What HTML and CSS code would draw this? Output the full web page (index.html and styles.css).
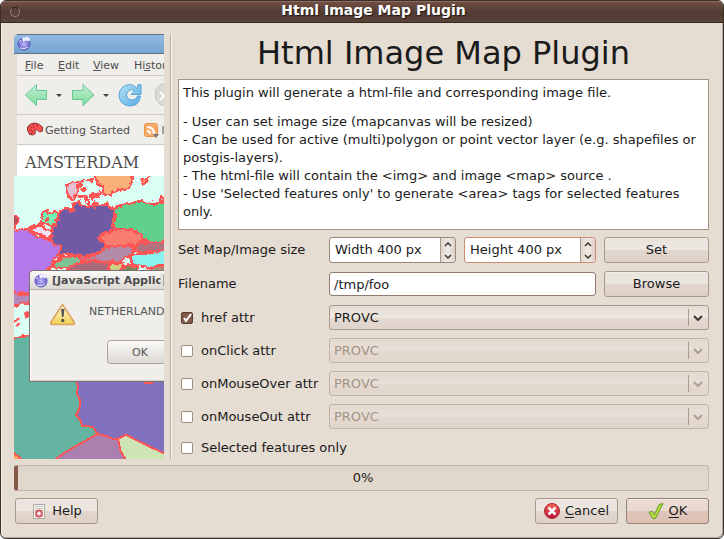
FILE: index.html
```html
<!DOCTYPE html>
<html lang="en">
<head>
<meta charset="utf-8">
<title>Html Image Map Plugin</title>
<link rel="stylesheet" href="styles.css">
</head>
<body>
<div class="window">
  <header class="titlebar"><span class="orb"></span><span class="caption">Html Image Map Plugin</span></header>
  <form class="content">
    <div class="main">
      <svg class="preview" viewBox="14 34 150 425" role="img" aria-label="Map preview in a browser">
        <defs>
          <linearGradient id="blue" x2="0" y2="1"><stop stop-color="#93bbe3"/><stop offset="1" stop-color="#75a2cf"/></linearGradient>
          <linearGradient id="green" x2="0" y2="1"><stop stop-color="#c4edd2"/><stop offset="1" stop-color="#7ddca0"/></linearGradient>
          <linearGradient id="sky" x2="1" y2="1"><stop stop-color="#b5dff5"/><stop offset="1" stop-color="#55aee4"/></linearGradient>
          <linearGradient id="cap" x2="0" y2="1"><stop stop-color="#fbfaf9"/><stop offset="1" stop-color="#dcd8d2"/></linearGradient>
          <linearGradient id="gold" x2="0" y2="1"><stop stop-color="#fffbe0"/><stop offset="1" stop-color="#f0cf4c"/></linearGradient>
          <radialGradient id="globe"><stop stop-color="#c5bfff"/><stop offset="1" stop-color="#5c55c2"/></radialGradient>
          <filter id="coast" color-interpolation-filters="sRGB" filterUnits="userSpaceOnUse" x="0" y="90" width="480" height="900"><feTurbulence type="fractalNoise" baseFrequency=".07" numOctaves="2" seed="4"/><feDisplacementMap in="SourceGraphic" scale="18" xChannelSelector="R" yChannelSelector="G"/></filter>
        </defs>
        <path fill="#dafff4" d="M14 176h150v283H14z"/>
        <g transform="translate(10 140) scale(.33333)" stroke="#ff5555" stroke-width="7" stroke-linejoin="round" filter="url(#coast)" shape-rendering="crispEdges">
          <path fill="#b478ea" d="M-6 278l26-6 8-6 24 3 30 22 22 3 18 10 46 8-4 26-10 14-20 4-8 24-14 10v70H-6z"/>
          <path fill="#b289b8" d="M-6 446l36 18 16 0 16-8v30l-24 6-16 4-28 2z"/>
          <path fill="#65b4a2" stroke="none" d="M-6 596l30-2 20-6h20v6l136 60v310H-6z"/>
          <path fill="none" d="M-6 599l30-5 20-6h20"/>
          <path fill="#b04e5e" d="M-6 216l28 12 2 12-8 12-4 20"/>
          <path fill="#6f5aa3" d="M152 212l14-8 26 10-4-20 12-6 12 8 18 4 26-4 30-4 10 8 18 14 4 16 4 26-8 14-30 18-10 8 6 12 8 14-12 8-16 10-36 8-54-6-28 2 10-24-20-8-12-16 8-28z"/>
          <path fill="#5fd08d" d="M314 210l8-12 60-12 14-4 10 10 70-4v118l-44 4-18-4-36-18-14-8-40-4-14-18 4-18z"/>
          <path fill="#f87d70" d="M264 288l24-10 20-8 30-4 40 8 18 14 6 16-26 10-42 10-48-8z"/>
          <path fill="#b37180" d="M370 324l26-16 80-4v28l-64 6-30-4z"/>
          <path fill="#b28ba9" d="M204 352l50-4 30-24 36-4 44-4 8 16-6 12-20 8-20 16-60-2-60-6z"/>
          <path fill="#89f2ee" d="M358 350l20-8 38-2 60-10v44l-64 8-40-6z"/>
          <path fill="#7dc294" d="M130 372l14-12 34-14 24 4 12 10-8 14-32 10-38-2z"/>
          <path fill="#a96b7c" d="M172 390l8-14 38-8 44-8 34 12-6 24h-50z"/>
          <path fill="#cbd082" d="M294 374l44-4 2 14-14 14h-26z"/>
          <path fill="#788752" d="M340 386l12-14 28 10 10 18h-50z"/>
          <path fill="#b18871" d="M416 386l30-10 30 4v18h-56z"/>
          <path fill="#72f5b5" d="M92 240l6-24 14-4 14 8 10-6 12 10-6 10-6 14-14 8-10-4-14-2-8 2z"/>
          <path fill="#f3e3f8" d="M50 268l24-8 18 0 24 8 10 12-2 14-22-6z"/>
          <path fill="#f8af78" d="M248 94l12 30 18 20 2 20 20 2 24-16 36-6 6-16 4-34z"/>
          <path fill="#e7bfd2" d="M174 170l-4-30 14-12 22-4 8 12-8 10-2 14-14 18z"/>
          <path fill="#e7bfd2" d="M242 164l14-2 2 12-14 2z"/>
          <path fill="#f8af78" d="M394 126l8-8 14-6-8 18-10 2z"/>
          <path fill="#9fcbd0" d="M450 182l2-6 24-10v18z"/>
          <path stroke-width="9" fill="none" d="M210 124l14-4m-8 30l12-6m-22 28l18-6 4 20m-20-8l-4 16m28-16l8 18m2-30l14 6 16-14m-22 34l16-6m-26 14l14 0m-58-60l14-4m18 30l0 4m22-48l-16-4m-46-16l14-6m104 56l6 4m-186-68h36M112 222l6-6m-12 24l12-4m-60 30l30-18"/>
        </g>
        <g transform="translate(10 260) scale(.33333)" fill="#ff5555">
          <path d="M42 158l10-6 8 8-4 12-10 4zM22 190l10-2-8 12-8-2zM12 180h10v4l-10 4zM18 176l10-4v8l-8 2z"/>
        </g>
        <g transform="translate(10 360) scale(.33333)" stroke="#ff5555" stroke-width="6" stroke-linejoin="round" shape-rendering="crispEdges">
          <path fill="#65b4a2" stroke="none" d="M6 30h290v290H6z"/>
          <path fill="#8070be" d="M196 56l8 24-4 18 10 24-2 26-10 16 14 18 4 16 32 2 14 22 28 6 26 12 22-4 14-8 126 66V56z"/>
          <path fill="#ab80af" d="M136 298l34-24 92-52 28 6 18 8 16 0 6 30 16 32v10H130z"/>
          <path fill="#cfe4b4" d="M324 236l24-12 30 16 100 48v20H346v-12l-14-22z"/>
          <path fill="#f8a568" d="M4 270l14 14 24 20H4z"/>
          <path fill="none" d="M402 68h28"/>
        </g>
        <path fill="#fff" d="M14 144h150v32H14z"/>
        <path fill="#efeeeb" d="M14 53h150v92H14z"/>
        <path fill="#e5ddd3" d="M14 53h3v123h-3z"/>
        <path fill="url(#blue)" d="M14 54V39q0-5 5-5h145v20z"/>
        <path stroke="#61717e" d="M17 34.5h147M14 53.500h150"/>
        <path stroke="#d2c9bf" d="M17 75.500h147M17 114.500h147M17 144.500h147"/>
        <g transform="translate(24 44)"><circle r="6.500" fill="url(#globe)"/><path fill="#eef" d="M-2-6.500h3l2-1 3 2-1 3-3-1-3 1z"/><path stroke="#e8e8ff" stroke-width="1" fill="none" d="M-5-2l2-2M-4 4q4 2 8-1"/></g>
        <g class="shot-text">
          <text x="25" y="69">File</text><text x="58" y="69">Edit</text><text x="93" y="69">View</text><text x="134" y="69">Histor</text>
          <text x="45" y="134">Getting Started</text>
          <path stroke="#555" d="M25 70.500h6M58 70.500h7M93 70.500h8M144 70.500h6M163 126v8"/>
        </g>
        <path fill="url(#green)" stroke="#65c793" stroke-linejoin="round" d="M25.500 95l11-10.500v6h10v9h-10v6zM94 95L83 84.500v6H72.500v9H83v6z"/>
        <path fill="#444" d="M56 94h6l-3 3zm47 0h6l-3 3z"/>
        <path fill="url(#sky)" stroke="#58a6d8" d="M137.500 89v-4l3.500-.5v10h-10l3.500-3.500q-3-3-6 0-4 4 0 8 3 2 7 0l2-3h3q-1 10-11 10-10-1-10.500-11 1-10 11-10.500 4 0 7 4z"/>
        <path fill="#dad9d6" stroke="#c9c6c2" d="M165 84h-4l-5.500 6v9l5.500 6h4"/><path stroke="#fff" stroke-width="2" d="M160 92l5 5m-5 3l5-5"/>
        <path fill="#ff4f4f" stroke="#8a3030" d="M27.500 130v-3l3-3 4-1 4 1 4 3v4l-3 1-2-2h-3l1 3-2 2-4-.5z"/><path stroke="#7a2929" stroke-width=".8" d="M29 126l3 2m1-4l1 4m-5 2h3m-1 4l2-3m3-7l2 3"/>
        <rect x="144.500" y="123.500" width="13" height="13" rx="2" fill="#f6ac68" stroke="#e9954b"/><path fill="none" stroke="#fff" stroke-width="2" d="M147 127q7 0 7 7m-7-3q3 0 3 3"/><path fill="#777" d="M153 134h6l-3 4z"/>
        <text class="shot-serif" x="25" y="168">AMSTERDAM</text>
        <path fill="#efeeeb" stroke="#76746f" d="M29.500 381.500V275q0-4.500 5-4.500H170v111z"/>
        <path fill="url(#cap)" d="M30 289v-14q0-4 4-4h130v18z"/><path stroke="#b7b1a9" d="M30 289.500h134"/>
        <path stroke="#fff" d="M30.500 290v90"/><path stroke="#d4d0ca" d="M31 380.500h133"/>
        <g transform="translate(41 281)"><circle r="6.500" fill="url(#globe)"/><path fill="#eef" d="M-2-6.500h3l2-1 3 2-1 3-3-1-3 1z"/><path stroke="#e8e8ff" stroke-width="1" fill="none" d="M-5-2l2-2M-4 4q4 2 8-1"/></g>
        <text class="shot-bold" x="52" y="284">[JavaScript Applic</text><path stroke="#e6e3de" stroke-width="3" d="M162 273v14"/><path stroke="#aaa59f" d="M163.500 275v11"/>
        <path fill="url(#gold)" stroke="#dba163" stroke-width="1.500" stroke-linejoin="round" d="M62.500 304.500L51 322q-1 2.500 1 2.500h21q2 0 1-2.500z"/>
        <path fill="#555" d="M61 309h3.500l-1 8h-1.500z"/><circle cx="62.700" cy="320.500" r="1.700" fill="#555"/>
        <text class="shot-small" x="89" y="315">NETHERLAND</text>
        <rect x="107.500" y="340.500" width="70" height="23" rx="3" fill="url(#cap)" stroke="#a9a197"/>
        <text class="shot-small" x="132" y="356">OK</text>
      </svg>
      <div class="divider"></div>
      <section class="settings">
        <h1>Html Image Map Plugin</h1>
        <div class="about">
          <p>This plugin will generate a html-file and corresponding image file.</p>
          <p>- User can set image size (mapcanvas will be resized)<br>- Can be used for active (multi)polygon or point vector layer (e.g. shapefiles or postgis-layers).<br>- The html-file will contain the &lt;img&gt; and image &lt;map&gt; source .<br>- Use 'Selected features only' to generate &lt;area&gt; tags for selected features only.</p>
        </div>
        <div class="fields">
          <label for="width">Set Map/Image size</label>
          <div class="sizes">
            <div class="spin"><input id="width" type="text" value="Width 400 px"><span class="steps"><button type="button" aria-label="Increase width"><svg viewBox="0 0 8 5"><path d="M1 4l3-3 3 3"/></svg></button><button type="button" aria-label="Decrease width"><svg viewBox="0 0 8 5"><path d="M1 1l3 3 3-3"/></svg></button></span></div>
            <div class="spin active"><input type="text" value="Height 400 px" aria-label="Height"><span class="steps"><button type="button" aria-label="Increase height"><svg viewBox="0 0 8 5"><path d="M1 4l3-3 3 3"/></svg></button><button type="button" aria-label="Decrease height"><svg viewBox="0 0 8 5"><path d="M1 1l3 3 3-3"/></svg></button></span></div>
          </div>
          <button class="btn" type="button">Set</button>
          <label for="file">Filename</label>
          <input class="file" id="file" type="text" value="/tmp/foo">
          <button class="btn" type="button">Browse</button>

          <label class="check"><input type="checkbox" checked>href attr</label>
          <div class="combo"><select aria-label="href attribute"><option>PROVC</option></select><svg viewBox="0 0 10 6"><path d="M1 1l4 4 4-4"/></svg></div>
          <label class="check"><input type="checkbox">onClick attr</label>
          <div class="combo off"><select aria-label="onClick attribute" disabled><option>PROVC</option></select><svg viewBox="0 0 10 6"><path d="M1 1l4 4 4-4"/></svg></div>
          <label class="check"><input type="checkbox">onMouseOver attr</label>
          <div class="combo off"><select aria-label="onMouseOver attribute" disabled><option>PROVC</option></select><svg viewBox="0 0 10 6"><path d="M1 1l4 4 4-4"/></svg></div>
          <label class="check"><input type="checkbox">onMouseOut attr</label>
          <div class="combo off"><select aria-label="onMouseOut attribute" disabled><option>PROVC</option></select><svg viewBox="0 0 10 6"><path d="M1 1l4 4 4-4"/></svg></div>
          <label class="check wide"><input type="checkbox">Selected features only</label>
        </div>
      </section>
    </div>
    <div class="progress" role="progressbar" aria-valuenow="0" aria-valuemin="0" aria-valuemax="100">0%</div>
    <footer class="actions">
      <button class="btn help" type="button"><svg class="icon" viewBox="0 0 16 16"><path fill="#f4f3f0" stroke="#a9aaa3" d="M2.500 1.500h11v14h-11z"/><path stroke="#c9ccc6" d="M4 3.500h8M4 5.500h8"/><circle cx="8" cy="10.500" r="3" fill="#fff" stroke="#cf5c62" stroke-width="1.800"/><path stroke="#cf5c62" d="M4.500 7l7 7m0-7l-7 7"/><circle cx="8" cy="10.500" r="1.300" fill="#fff"/></svg>Help</button>
      <button class="btn cancel" type="button"><svg class="icon" viewBox="0 0 16 16"><defs><linearGradient id="red" x2="0" y2="1"><stop stop-color="#f06a50"/><stop offset="1" stop-color="#b80f3a"/></linearGradient></defs><circle cx="8" cy="8" r="7.500" fill="url(#red)" stroke="#b32432"/><path stroke="#fff" stroke-width="2.500" d="M4.500 4.500l7 7m0-7l-7 7"/></svg><span><u>C</u>ancel</span></button>
      <button class="btn ok" type="submit"><svg class="icon" viewBox="0 0 16 16"><path fill="#b5da43" stroke="#689c2d" stroke-linejoin="round" d="M1 9.500L4 8l2.500 3.500L11 1.500 15 .5 7.500 15.500H5z"/></svg><span><u>O</u>K</span></button>
    </footer>
  </form>
</div>
</body>
</html>
```
FILE: styles.css
```css
* { box-sizing: border-box; }
body { margin: 0; background: #fff; color: #1a1a1a; font: 13px/18px "DejaVu Sans", sans-serif; }
button, input, select { font: inherit; color: inherit; margin: 0; }
.window { display: flex; flex-direction: column; min-height: 100vh; background: #e5dcd2; border: 1px solid #3b302a; border-radius: 6px; overflow: hidden; box-shadow: inset -1px -1px #b9aaa0, inset 1px 0 #f5eee8; }
.titlebar { display: flex; align-items: center; height: 22px; padding-left: 9px; border-bottom: 1px solid #38291f; border-top: 1px solid #8c6a5d; background: linear-gradient(#714e43, #503b32 55%, #5b4439); }
.orb { width: 10px; height: 10px; border: 1px solid #9b8378; border-top-color: #2c201b; border-radius: 50%; background: #58433a; }
.caption { flex: 1; padding-left: 4px; line-height: 16px; padding-bottom: 4px; text-align: center; color: #fff; font-size: 14px; font-weight: bold; text-shadow: 1px 1px 1px #1f1713; }
.content { flex: 1; padding: 11px 14px 14px 13px; }
.main { display: flex; align-items: stretch; }
.preview { flex: none; width: 150px; height: 425px; }
.shot-text { font: 11px "DejaVu Sans", sans-serif; fill: #4d4d4d; }
.shot-small { font: 11px "DejaVu Sans", sans-serif; fill: #555; }
.shot-bold { font: bold 11px "DejaVu Sans", sans-serif; fill: #4d4d4d; }
.shot-serif { font: 300 16px "DejaVu Serif", serif; fill: #4d4d4d; }
.divider { width: 2px; margin: 0 6px; border-left: 1px solid #b9aba1; background: #faf6f2; }
.settings { flex: 1; min-width: 0; }
h1 { margin: 0 0 7px; font-size: 32px; line-height: 38px; font-weight: normal; text-align: center; }
.about { min-height: 151px; padding: 4px; border: 1px solid #a49285; background: #fff; }
.about p { margin: 0 0 11px; }
.about p:last-child { margin: 0; }
.fields { display: grid; grid-template-columns: 143px 1fr 105px; grid-template-rows: 26px 26px repeat(3, 25px) 25px 21px; gap: 8px; margin-top: 7px; align-items: center; }
.sizes { display: grid; grid-template-columns: 127px 1fr; gap: 8px; }
.spin { display: flex; height: 26px; border: 1px solid #9a887b; border-radius: 3px; background: #fff; overflow: hidden; }
.spin.active { border-color: #d08c70; }
.spin input { flex: 1; min-width: 0; padding: 0 5px; border: 0; background: none; outline: 0; }
.steps { display: flex; flex-direction: column; width: 15px; border-left: 1px solid #a99789; background: linear-gradient(90deg, #e0d6ce, #efe9e4, #ddd2ca); }
.steps button { display: flex; flex: 1; align-items: center; justify-content: center; padding: 0; border: 0; background: none; }
.steps svg { width: 8px; height: 5px; }
.steps path, .combo path { fill: none; stroke: #40352f; stroke-width: 1.500; }
.file { width: 100%; height: 24px; padding: 0 4px; border: 1px solid #8f7c6f; border-radius: 3px; background: #fff; }
.btn { display: flex; align-items: center; justify-content: center; gap: 5px; height: 26px; padding: 0 8px; border: 1px solid #a99789; border-radius: 3px; background: linear-gradient(#ebe4dd, #ece6e1 50%, #e2d6ce 52%, #dcd0c7); box-shadow: inset 0 1px #f2ede8; }
.check { display: flex; align-items: center; gap: 8px; white-space: nowrap; }
.check input { appearance: none; width: 12px; height: 12px; margin-left: 3px; border: 1px solid #a28c7e; border-radius: 2px; background: #fff; }
.check input:checked { border-color: #5a3b2f; background: #83594b url("data:image/svg+xml,%3Csvg xmlns='http://www.w3.org/2000/svg' viewBox='0 0 10 10'%3E%3Cpath d='M2 5l2 3 5-7' fill='none' stroke='white' stroke-width='2'/%3E%3C/svg%3E"); }
.combo { position: relative; grid-column: 2 / 4; }
.combo select { display: block; width: 100%; height: 25px; padding: 0 24px 0 4px; border: 1px solid #a99789; border-radius: 3px; appearance: none; background: linear-gradient(#e4dad2, #eee8e3 50%, #e4dad2 52%, #dfd3ca); opacity: 1; }
.combo::after { content: ""; position: absolute; right: 20px; top: 4px; bottom: 4px; border-left: 1px solid #ab9b8f; }
.combo svg { position: absolute; right: 6px; top: 10px; width: 10px; height: 6px; pointer-events: none; }
.combo path { stroke-width: 2; }
.combo.off select { color: #a49284; border-color: #c4b4a8; background: linear-gradient(#e2d9d0, #e8dfd8 50%, #e3d9d0 52%, #e1d6cc); }
.off path { stroke: #ac9c8e; }
.wide { grid-column: 1 / 4; }
.progress { margin-top: 6px; height: 26px; border: 1px solid #c4b5aa; border-left: 4px solid #865a49; border-radius: 3px; background: linear-gradient(#ddd2c9, #e2d7cd 30%, #e2d7cd); line-height: 24px; text-align: center; }
.actions { display: flex; gap: 8px; margin-top: 7px; padding-left: 1px; }
.actions .btn { width: 83px; padding: 0; }
.help { margin-right: auto; }
.ok { background: linear-gradient(#ecdad1, #e9d9d0 50%, #dfc5b9 52%, #dcc0b3); border-color: #958175; }
.icon { width: 16px; height: 16px; }
u { text-underline-offset: 2px; }
```
